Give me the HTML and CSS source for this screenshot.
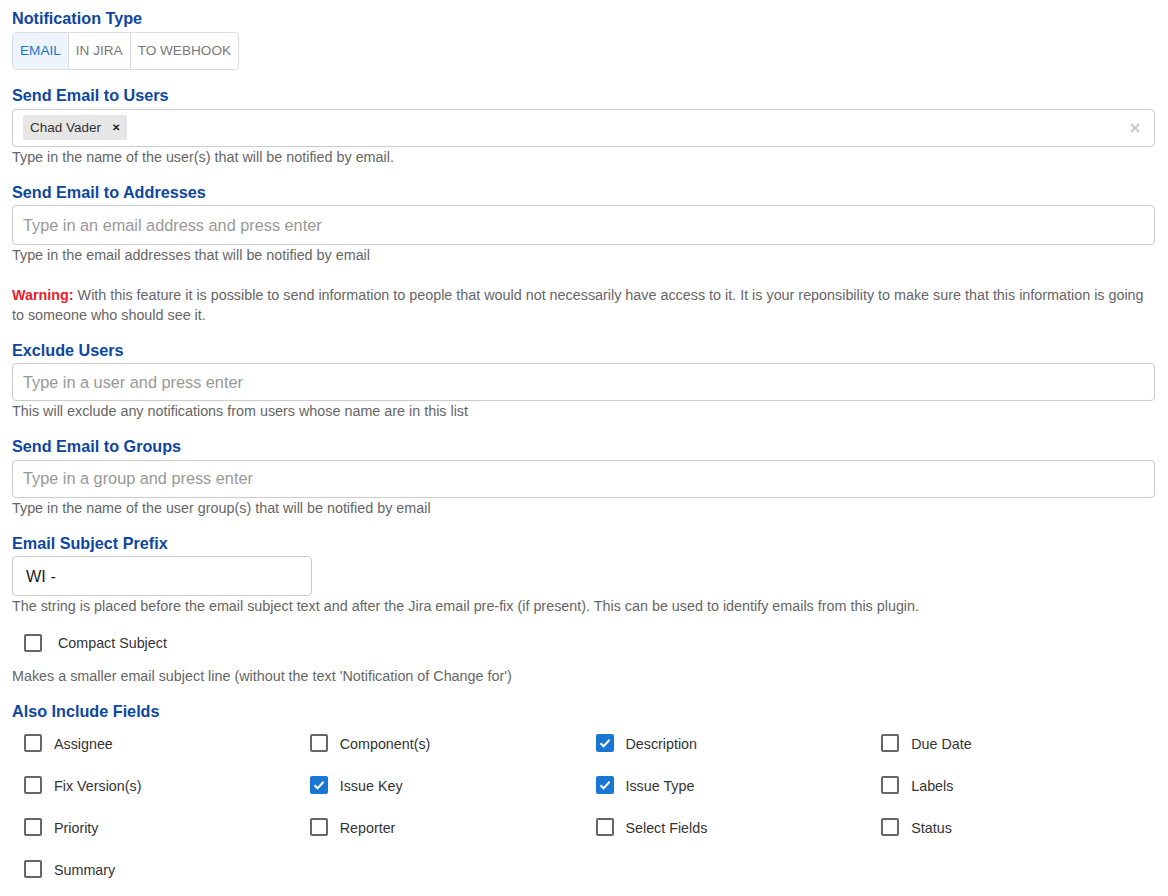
FILE: index.html
```html
<!DOCTYPE html>
<html>
<head>
<meta charset="utf-8">
<link rel="stylesheet" href="styles.css">
</head>
<body>
<div class="page">
  <section class="sec sec-first">
    <div class="label">Notification Type</div>
    <div class="btn-group">
      <span class="seg active">EMAIL</span>
      <span class="seg">IN JIRA</span>
      <span class="seg">TO WEBHOOK</span>
    </div>
  </section>

  <section class="sec">
    <div class="label">Send Email to Users</div>
    <div class="input multi">
      <span class="chip">Chad Vader <span class="chip-x">&#x2715;</span></span>
      <span class="clear"><svg width="10" height="10" viewBox="0 0 10 10"><path d="M1 1L9 9M9 1L1 9" stroke="#c8c8c8" stroke-width="1.8" fill="none"/></svg></span>
    </div>
    <div class="help">Type in the name of the user(s) that will be notified by email.</div>
  </section>

  <section class="sec">
    <div class="label">Send Email to Addresses</div>
    <div class="input tall"><span class="ph">Type in an email address and press enter</span></div>
    <div class="help">Type in the email addresses that will be notified by email</div>
  </section>

  <p class="warning"><b>Warning:</b> With this feature it is possible to send information to people that would not necessarily have access to it. It is your reponsibility to make sure that this information is going to someone who should see it.</p>

  <section class="sec">
    <div class="label">Exclude Users</div>
    <div class="input"><span class="ph">Type in a user and press enter</span></div>
    <div class="help">This will exclude any notifications from users whose name are in this list</div>
  </section>

  <section class="sec">
    <div class="label">Send Email to Groups</div>
    <div class="input"><span class="ph">Type in a group and press enter</span></div>
    <div class="help">Type in the name of the user group(s) that will be notified by email</div>
  </section>

  <section class="sec sec-prefix">
    <div class="label">Email Subject Prefix</div>
    <div class="input tall short"><span class="val">WI -</span></div>
    <div class="help">The string is placed before the email subject text and after the Jira email pre-fix (if present). This can be used to identify emails from this plugin.</div>
    <div class="compact">
      <label class="cb cb-compact"><span class="box"></span><span class="cb-label">Compact Subject</span></label>
    </div>
    <div class="help">Makes a smaller email subject line (without the text 'Notification of Change for')</div>
  </section>

  <section class="sec">
    <div class="label label-fields">Also Include Fields</div>
    <div class="grid">
      <label class="cb"><span class="box"></span><span class="cb-label">Assignee</span></label>
      <label class="cb"><span class="box"></span><span class="cb-label">Component(s)</span></label>
      <label class="cb"><span class="box checked"><svg width="14" height="14" viewBox="0 0 14 14"><path d="M2.5 7.2L5.6 10.2L11.6 3.8" stroke="#fff" stroke-width="2" fill="none"/></svg></span><span class="cb-label">Description</span></label>
      <label class="cb"><span class="box"></span><span class="cb-label">Due Date</span></label>
      <label class="cb"><span class="box"></span><span class="cb-label">Fix Version(s)</span></label>
      <label class="cb"><span class="box checked"><svg width="14" height="14" viewBox="0 0 14 14"><path d="M2.5 7.2L5.6 10.2L11.6 3.8" stroke="#fff" stroke-width="2" fill="none"/></svg></span><span class="cb-label">Issue Key</span></label>
      <label class="cb"><span class="box checked"><svg width="14" height="14" viewBox="0 0 14 14"><path d="M2.5 7.2L5.6 10.2L11.6 3.8" stroke="#fff" stroke-width="2" fill="none"/></svg></span><span class="cb-label">Issue Type</span></label>
      <label class="cb"><span class="box"></span><span class="cb-label">Labels</span></label>
      <label class="cb"><span class="box"></span><span class="cb-label">Priority</span></label>
      <label class="cb"><span class="box"></span><span class="cb-label">Reporter</span></label>
      <label class="cb"><span class="box"></span><span class="cb-label">Select Fields</span></label>
      <label class="cb"><span class="box"></span><span class="cb-label">Status</span></label>
      <label class="cb"><span class="box"></span><span class="cb-label">Summary</span></label>
    </div>
  </section>
</div>
</body>
</html>
```

FILE: styles.css
```css
html, body {
  margin: 0;
  padding: 0;
  background: #fff;
}
body {
  font-family: "Liberation Sans", Arial, sans-serif;
  color: #333;
}
.page {
  padding: 8px 13px 0 12px;
}
.sec {
  margin-bottom: 15px;
}
.sec-first {
  margin-bottom: 15.5px;
}
.label {
  font-size: 16.2px;
  font-weight: bold;
  line-height: 20px;
  color: #0d47a1;
  margin-bottom: 3.5px;
}
.label-fields {
  margin-bottom: 2px;
}
.btn-group {
  display: inline-flex;
  height: 38px;
  border: 1px solid #dcdcdc;
  border-radius: 4px;
  box-sizing: border-box;
  overflow: hidden;
}
.seg {
  display: flex;
  align-items: center;
  padding: 0 7px;
  font-size: 13.6px;
  color: #7a7a7a;
  border-left: 1px solid #dcdcdc;
}
.seg:first-child {
  border-left: none;
}
.seg.active {
  background: #eef4fd;
  color: #1976d2;
}
.input {
  display: flex;
  align-items: center;
  height: 38px;
  box-sizing: border-box;
  border: 1px solid #ccc;
  border-radius: 4px;
  padding: 0 10px;
  font-size: 16.3px;
  background: #fff;
}
.input.tall {
  height: 40px;
}
.input.short {
  width: 300px;
  padding: 0 13px;
}
.ph {
  color: #999;
}
.val {
  color: #222;
}
.multi {
  justify-content: space-between;
}
.chip {
  display: inline-flex;
  align-items: center;
  height: 25px;
  width: 104px;
  box-sizing: border-box;
  padding: 0 0 0 7px;
  background: #e6e6e6;
  border-radius: 2px;
  font-size: 13.5px;
  color: #333;
}
.chip-x {
  margin-left: 11px;
  font-size: 10px;
  font-weight: bold;
  color: #222;
}
.clear {
  display: flex;
  align-items: center;
  margin-right: 4px;
}
.help {
  font-size: 14.35px;
  line-height: 20px;
  color: #666;
}
.warning {
  margin: 20px 0 14.5px;
  font-size: 14.35px;
  line-height: 20px;
  color: #666;
}
.warning b {
  color: #ee1a2e;
}
.compact {
  padding: 8.5px 0 4px;
}
.cb {
  display: flex;
  align-items: center;
  height: 37px;
  padding-left: 12px;
}
.cb-compact .cb-label {
  margin-left: 16px;
}
.box {
  width: 18px;
  height: 18px;
  box-sizing: border-box;
  border: 2px solid #666;
  border-radius: 2px;
  display: flex;
  align-items: center;
  justify-content: center;
  flex: none;
}
.box.checked {
  background: #1976d2;
  border-color: #1976d2;
}
.cb-label {
  margin-left: 12px;
  font-size: 14.3px;
  color: #333;
}
.grid {
  display: grid;
  grid-template-columns: repeat(4, 1fr);
  grid-auto-rows: 42px;
}
.grid .cb {
  height: 42px;
}
.grid .cb .box {
  margin-top: -1px;
}
```
